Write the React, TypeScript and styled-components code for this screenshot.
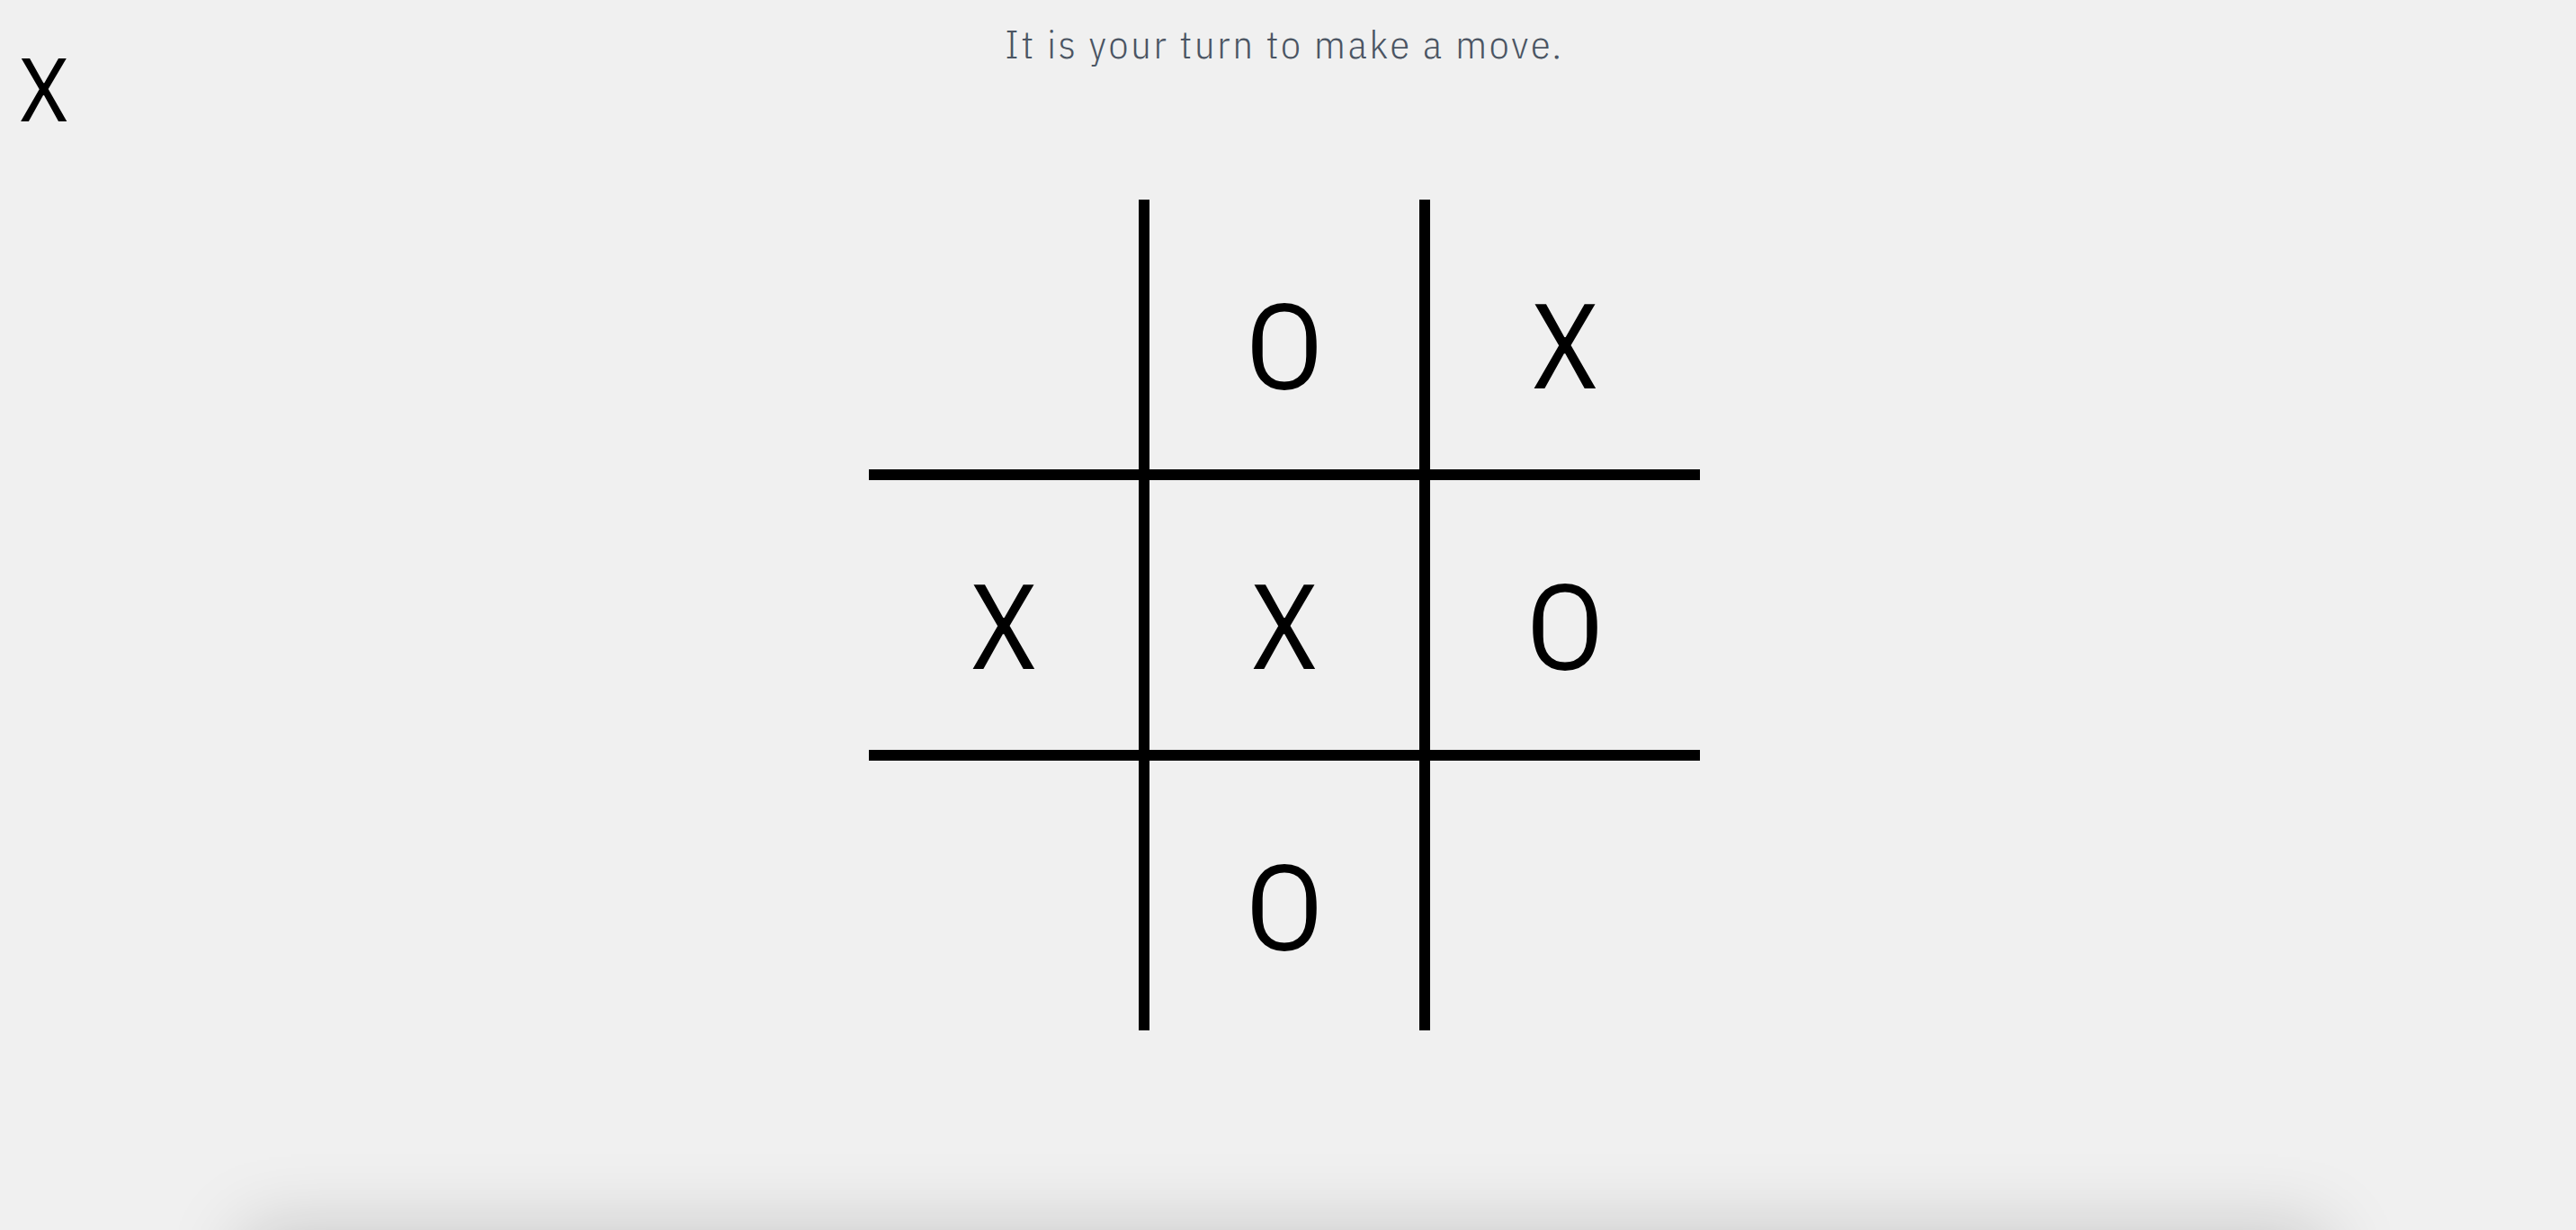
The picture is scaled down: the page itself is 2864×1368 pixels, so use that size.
import React from "react";
import styled, { createGlobalStyle } from "styled-components";

const GlobalStyle = createGlobalStyle`
  html, body {
    margin: 0;
    padding: 0;
    background: #f0f0f0;
  }
  body {
    font-family: "IBM Plex Sans Condensed", "Roboto", sans-serif;
  }
`;

const Page = styled.main`
  height: 100vh;
  overflow: hidden;
  padding-right: 8px;
  display: flex;
  flex-direction: column;
  align-items: center;
`;

const Header = styled.header`
  align-self: stretch;
  display: grid;
  grid-template-columns: 1fr auto 1fr;
  align-items: start;
  padding-top: 19px;
`;

const PlayerMark = styled.div`
  justify-self: start;
  margin: 29px 0 0 21px;
  font-size: 100px;
  line-height: 1;
  color: #000;
`;

const Prompt = styled.p`
  margin: 0;
  font-size: 44px;
  font-weight: 300;
  line-height: 60px;
  letter-spacing: 2.9px;
  color: #4b5563;
  text-align: center;
`;

const Board = styled.div`
  margin-top: 74px;
  display: grid;
  grid-template-columns: repeat(3, 300px);
  grid-template-rows: repeat(3, 300px);
  gap: 12px;
  background: #000;
`;

const Cell = styled.button`
  all: unset;
  box-sizing: border-box;
  display: flex;
  align-items: center;
  justify-content: center;
  padding-top: 20px;
  background: #f0f0f0;
  font-family: "IBM Plex Sans Condensed", "Roboto", sans-serif;
  font-size: 134px;
  line-height: 1;
  color: #000;
  cursor: pointer;
`;

const Panel = styled.section`
  flex: none;
  margin-top: 222px;
  width: 81%;
  height: 320px;
  background: #f0f0f0;
  box-shadow: 0 0 80px rgba(0, 0, 0, 0.18);
`;

const board: string[] = ["", "O", "X", "X", "X", "O", "", "O", ""];

export default function App() {
  return (
    <>
      <GlobalStyle />
      <Page>
        <Header>
          <PlayerMark>X</PlayerMark>
          <Prompt>It is your turn to make a move.</Prompt>
          <span />
        </Header>
        <Board>
          {board.map((v, i) => (
            <Cell key={i} aria-label={`cell ${i + 1}`}>
              {v}
            </Cell>
          ))}
        </Board>
        <Panel />
      </Page>
    </>
  );
}
